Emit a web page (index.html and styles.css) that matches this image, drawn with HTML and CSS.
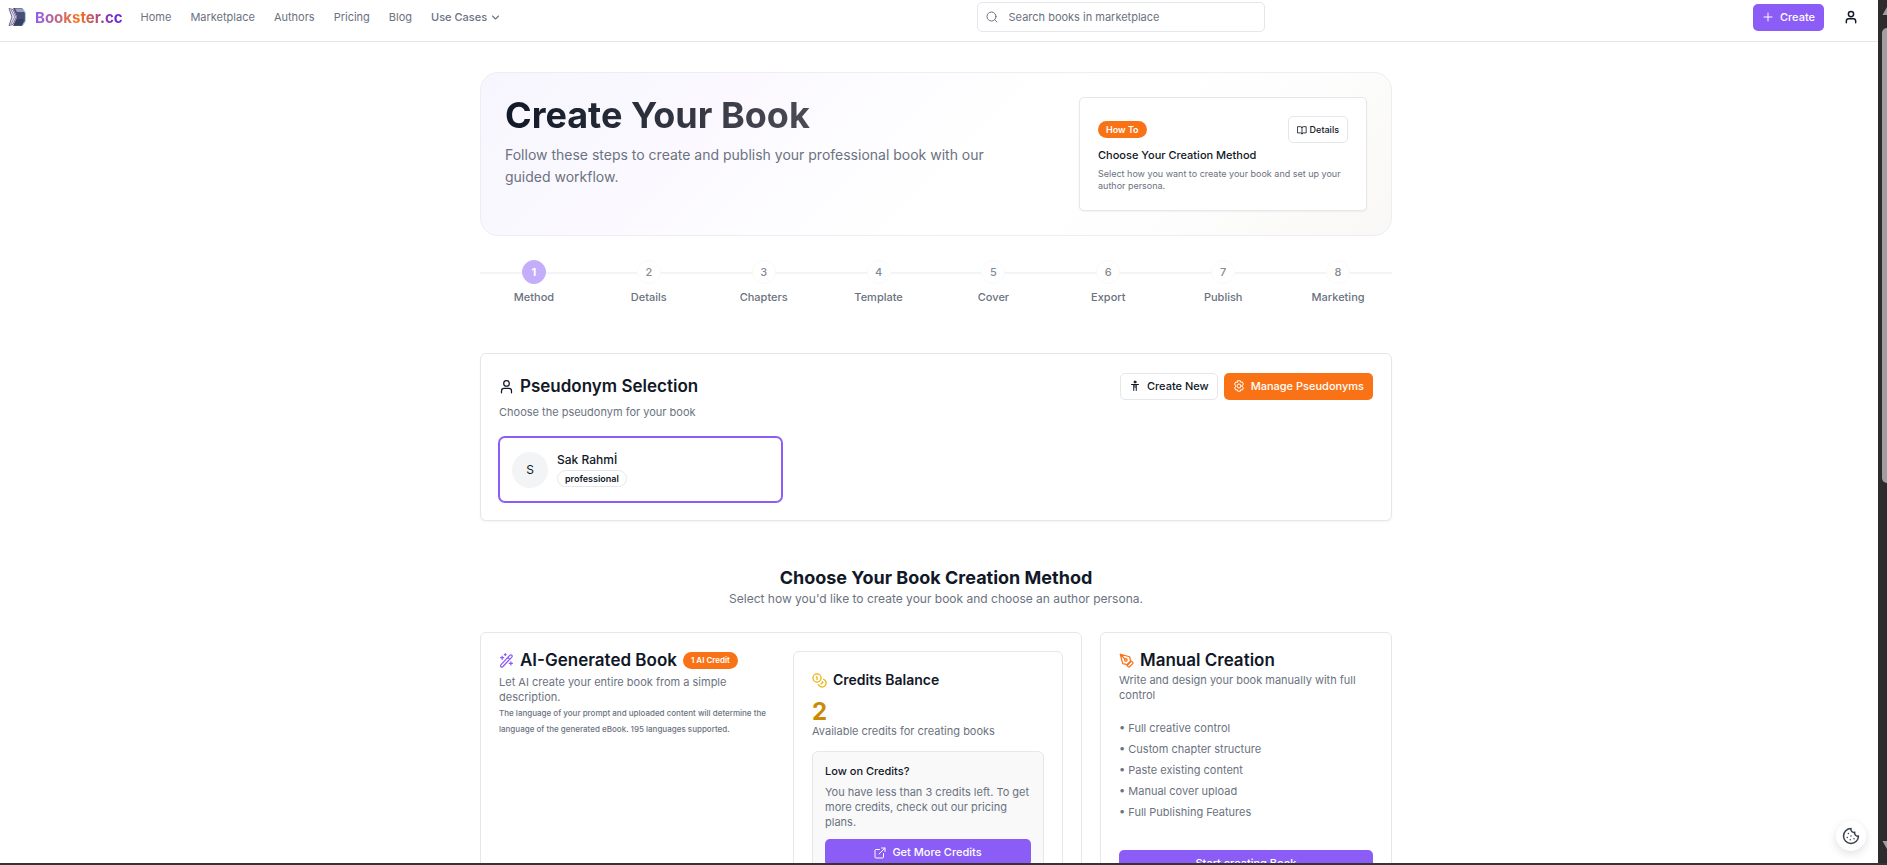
FILE: index.html
```html
<!DOCTYPE html>
<html lang="en">
<head>
<meta charset="utf-8">
<meta name="viewport" content="width=device-width, initial-scale=1">
<title>Create Your Book – Bookster.cc</title>
<link rel="stylesheet" href="styles.css">
</head>
<body>
<div class="window">
<div class="page">
  <header class="topbar">
    <div class="topbar-left">
      <a class="brand" href="#">
        <svg class="brand-mark" viewBox="0 0 18 20" aria-hidden="true">
          <path d="M5 1h9l3 4v10l-3 4H5l4-9z" fill="#4b4f78"/>
          <path d="M7 1.500h7l2 3.500H9z" fill="#9aa3c4"/>
          <path d="M9 12h7l-2 6H6z" fill="#394066"/>
          <path d="M15 2l2.500 4v8L15 18" fill="none" stroke="#a9d5e3" stroke-width="1.200"/>
          <path d="M1 1.500l4 1 3.500 7.500L5 17.500l-4 1L4 10z" fill="#e4dff0" stroke="#71678f" stroke-width="1"/>
          <path d="M3 3l4 7-4 7" fill="none" stroke="#8d84aa" stroke-width="1"/>
        </svg>
        <span class="brand-name">Bookster.cc</span>
      </a>
      <nav class="nav">
        <a href="#">Home</a>
        <a href="#">Marketplace</a>
        <a href="#">Authors</a>
        <a href="#">Pricing</a>
        <a href="#">Blog</a>
        <button class="nav-menu" type="button">Use Cases
          <svg class="icon icon-xs" viewBox="0 0 24 24"><path d="m4 8 8 8 8-8"/></svg>
        </button>
      </nav>
    </div>
    <label class="search">
      <svg class="icon icon-sm" viewBox="0 0 24 24"><circle cx="11" cy="11" r="9"/><path d="m22 22-4.500-4.500"/></svg>
      <input type="search" placeholder="Search books in marketplace" aria-label="Search books in marketplace">
    </label>
    <div class="topbar-right">
      <button class="btn btn-primary" type="button">
        <svg class="icon icon-sm" viewBox="0 0 24 24"><path d="M4 12h16M12 4v16"/></svg>
        Create
      </button>
      <button class="btn-account" type="button" aria-label="Account">
        <svg class="icon icon-md" viewBox="0 0 24 24"><circle cx="12" cy="7" r="4.500"/><path d="M4 22v-3a4 4 0 0 1 4-4h8a4 4 0 0 1 4 4v3"/></svg>
      </button>
    </div>
  </header>

  <main class="content">
    <section class="hero">
      <div class="hero-text">
        <h1>Create Your Book</h1>
        <p>Follow these steps to create and publish your professional book with our guided workflow.</p>
      </div>
      <aside class="howto">
        <div class="howto-top">
          <span class="badge badge-orange">How To</span>
          <button class="btn btn-outline btn-small" type="button">
            <svg class="icon icon-book" viewBox="0 0 24 24"><path d="M12 6v15M2 4h7a3 3 0 0 1 3 3 3 3 0 0 1 3-3h7v15h-7a3 3 0 0 0-3 3 3 3 0 0 0-3-3H2z"/></svg>
            Details
          </button>
        </div>
        <h2>Choose Your Creation Method</h2>
        <p>Select how you want to create your book and set up your author persona.</p>
      </aside>
    </section>

    <ol class="steps">
      <li class="step step-current"><span class="step-dot">1</span><span>Method</span></li>
      <li class="step"><span class="step-dot">2</span><span>Details</span></li>
      <li class="step"><span class="step-dot">3</span><span>Chapters</span></li>
      <li class="step"><span class="step-dot">4</span><span>Template</span></li>
      <li class="step"><span class="step-dot">5</span><span>Cover</span></li>
      <li class="step"><span class="step-dot">6</span><span>Export</span></li>
      <li class="step"><span class="step-dot">7</span><span>Publish</span></li>
      <li class="step"><span class="step-dot">8</span><span>Marketing</span></li>
    </ol>

    <section class="card pseudonym">
      <div class="pseudonym-head">
        <h2 class="card-title">
          <svg class="icon icon-lg" viewBox="0 0 24 24"><circle cx="12" cy="7" r="4.500"/><path d="M4 22v-3a4 4 0 0 1 4-4h8a4 4 0 0 1 4 4v3"/></svg>
          Pseudonym Selection
        </h2>
        <div class="actions">
          <button class="btn btn-outline" type="button">
            <svg class="icon icon-sm" viewBox="0 0 24 24"><circle cx="12" cy="4" r="2" fill="currentColor"/><path d="M5 9h14M12 9v6M9.500 9v12M14.500 9v12"/></svg>
            Create New
          </button>
          <button class="btn btn-orange" type="button">
            <svg class="icon icon-sm" viewBox="0 0 24 24"><path d="M9.500 1.500h5l1 3 3-.5 2.500 4-2 2.500v3l2 2.500-2.500 4-3-.5-1 3h-5l-1-3-3 .5L3 16l2-2.500v-3L3 8l2.500-4 3 .5z"/><circle cx="12" cy="12" r="4"/></svg>
            Manage Pseudonyms
          </button>
        </div>
      </div>
      <p class="muted">Choose the pseudonym for your book</p>
      <button class="persona" type="button">
        <span class="avatar">S</span>
        <span class="persona-info">
          <span class="persona-name">Sak Rahmİ</span>
          <span class="badge badge-outline">professional</span>
        </span>
      </button>
    </section>

    <section class="methods">
      <div class="methods-head">
        <h2>Choose Your Book Creation Method</h2>
        <p>Select how you'd like to create your book and choose an author persona.</p>
      </div>
      <div class="methods-grid">
        <article class="card ai">
          <div class="ai-intro">
            <h3 class="card-title">
              <svg class="icon icon-lg icon-purple" viewBox="0 0 24 24"><path d="M3 19 17.500 3.500a2 2 0 0 1 3 3L6 22a2 2 0 0 1-3-3zM14 7l3 3M5 5v5M2.500 7.500h5M19 14v5M16.500 16.500h5M10 1v3M8.500 2.500h3"/></svg>
              AI-Generated Book
              <span class="badge badge-orange badge-tiny">1 AI Credit</span>
            </h3>
            <p class="muted">Let AI create your entire book from a simple description.</p>
            <p class="note">The language of your prompt and uploaded content will determine the language of the generated eBook. 195 languages supported.</p>
          </div>
          <div class="card credits">
            <h4>
              <svg class="icon icon-lg icon-yellow" viewBox="0 0 24 24"><circle cx="8" cy="8" r="6.500"/><path d="M18.500 10a6.500 6.500 0 1 1-8.500 8.500M7 6h1v4.500M16.500 14l1 .700-3 3"/></svg>
              Credits Balance
            </h4>
            <strong class="credits-count">2</strong>
            <p class="muted">Available credits for creating books</p>
            <div class="low-credits">
              <h5>Low on Credits?</h5>
              <p class="muted">You have less than 3 credits left. To get more credits, check out our pricing plans.</p>
              <button class="btn btn-primary btn-block" type="button">
                <svg class="icon icon-sm" viewBox="0 0 24 24"><path d="M15 2h7v7M10 14 22 2M19 13v7a2 2 0 0 1-2 2H4a2 2 0 0 1-2-2V7a2 2 0 0 1 2-2h7"/></svg>
                Get More Credits
              </button>
            </div>
          </div>
        </article>
        <article class="card manual">
          <h3 class="card-title">
            <svg class="icon icon-lg icon-orange" viewBox="0 0 24 24"><path d="m15 22-2-2 7-7 2 2a1.500 1.500 0 0 1 0 2l-5 5a1.500 1.500 0 0 1-2 0zM18.500 13 17 6 2 2l4 15 7 1.500zM2 2l7.500 7.500"/><circle cx="11" cy="11" r="2"/></svg>
            Manual Creation
          </h3>
          <p class="muted">Write and design your book manually with full control</p>
          <ul class="features">
            <li>Full creative control</li>
            <li>Custom chapter structure</li>
            <li>Paste existing content</li>
            <li>Manual cover upload</li>
            <li>Full Publishing Features</li>
          </ul>
          <button class="btn btn-primary btn-block" type="button">Start creating Book</button>
        </article>
      </div>
    </section>
  </main>

  <button class="cookie" type="button" aria-label="Cookie settings">
    <svg class="icon icon-cookie" viewBox="0 0 24 24"><path d="M12 2a10 10 0 1 0 10 10 4 4 0 0 1-5-5 4 4 0 0 1-5-5M8.500 8.500v.01M16 15.500v.01M12 12v.01M11 17v.01M7 14v.01"/></svg>
  </button>
</div>
<div class="scrollbar" aria-hidden="true">
  <svg class="scroll-arrow" viewBox="0 0 10 10"><path d="M0 9 5 0l5 9z"/></svg>
  <div class="scroll-track"><div class="scroll-thumb"></div></div>
  <svg class="scroll-arrow" viewBox="0 0 10 10"><path d="M0 1 5 10l5-9z"/></svg>
</div>
</div>
</body>
</html>
```
FILE: styles.css
```css
:root {
  --ink: #111827;
  --gray: #6b7280;
  --line: #e5e7eb;
  --purple: #8b5cf6;
  --orange: #f97316;
}

* { box-sizing: border-box; margin: 0; }

body {
  font: 11px/15px Inter, "Liberation Sans", sans-serif;
  color: var(--ink);
  background: #2c2c2c;
}

a { color: inherit; text-decoration: none; }
button, input { font: inherit; color: inherit; }
button { cursor: pointer; }
h1, h2, h3, h4, h5 { font-weight: 600; }

.window {
  display: flex;
  height: 100vh;
  overflow: hidden;
  border-bottom: 2px solid #373435;
}

.page {
  position: relative;
  flex: 1;
  min-width: 0;
  overflow: hidden;
  background: #fff;
}

/* icons */
.icon {
  flex: none;
  fill: none;
  stroke: currentColor;
  stroke-width: 2;
  stroke-linecap: round;
  stroke-linejoin: round;
}
.icon-xs { width: 9px; height: 9px; stroke-width: 3; }
.icon-sm { width: 12px; height: 12px; }
.icon-md { width: 14px; height: 14px; stroke-width: 2.5; }
.icon-lg { width: 15px; height: 15px; }
.icon-book { width: 10px; height: 10px; }
.icon-cookie { width: 18px; height: 18px; }
.icon-purple { color: var(--purple); }
.icon-yellow { color: #eab308; }
.icon-orange { color: var(--orange); }

/* top bar */
.topbar {
  display: flex;
  align-items: center;
  justify-content: space-between;
  padding: 2px 12px 9px 8px;
  border-bottom: 1px solid var(--line);
}
.topbar-left, .topbar-right, .nav, .brand { display: flex; align-items: center; }
.topbar-left { gap: 18px; }
.brand { gap: 9px; }
.brand-mark { width: 18px; height: 20px; }
.brand-name {
  font-size: 15px;
  font-weight: 700;
  background: linear-gradient(90deg, var(--purple), var(--orange) 50%, #6d28d9 90%);
  background-clip: text;
  color: transparent;
}
.nav { gap: 19px; color: var(--gray); }
.nav-menu {
  display: flex;
  align-items: center;
  gap: 4px;
  padding: 0;
  border: 0;
  background: none;
  font-weight: 500;
}
.search {
  display: flex;
  align-items: center;
  gap: 11px;
  width: 288px;
  height: 30px;
  margin-right: 12px;
  padding: 0 8px;
  border: 1px solid var(--line);
  border-radius: 5px;
  color: var(--gray);
}
.search input {
  flex: 1;
  min-width: 0;
  padding: 0;
  border: 0;
  outline: 0;
  background: none;
}
.search input::placeholder { color: var(--gray); opacity: 1; }
.topbar-right { gap: 12px; }
.btn-account {
  display: grid;
  place-items: center;
  width: 30px;
  height: 27px;
  padding: 0;
  border: 0;
  background: none;
}

/* buttons and badges */
.btn {
  display: inline-flex;
  align-items: center;
  justify-content: center;
  gap: 6px;
  height: 27px;
  padding: 0 8px;
  border: 1px solid transparent;
  border-radius: 5px;
  font-weight: 500;
  white-space: nowrap;
}
.btn-primary { background: var(--purple); color: #fff; }
.btn-orange { background: var(--orange); color: #fff; }
.btn-outline { background: #fff; border-color: var(--line); }
.btn-small { gap: 3px; font-size: 9px; }
.btn-block { width: 100%; }

.badge {
  display: inline-block;
  padding: 0 7px;
  border: 1px solid transparent;
  border-radius: 9px;
  font-size: 9px;
  line-height: 15px;
  font-weight: 600;
}
.badge-orange { background: var(--orange); color: #fff; }
.badge-outline { border-color: var(--line); }
.badge-tiny { font-size: 8px; }

/* main column */
.content {
  max-width: 918px;
  margin: 0 auto;
  padding: 30px 6px 0 0;
}
.hero {
  display: flex;
  align-items: flex-start;
  justify-content: space-between;
  padding: 24px;
  border: 1px solid #eeeef2;
  border-radius: 18px;
  background: linear-gradient(135deg, #f7f6fe, #fbf9ff 25%, #fff 55%, #fefefe 75%, #f9f8f6);
}
.hero-text { max-width: 504px; }
.hero h1 {
  width: max-content;
  font-size: 36px;
  line-height: 36px;
  font-weight: 700;
  background: linear-gradient(90deg, #111827, #4b4b55);
  background-clip: text;
  color: transparent;
}
.hero-text p {
  margin-top: 11px;
  font-size: 14px;
  line-height: 22px;
  color: var(--gray);
}
.howto {
  width: 288px;
  padding: 18px;
  border: 1px solid var(--line);
  border-radius: 5px;
  background: #fff;
  box-shadow: 0 1px 2px rgb(0 0 0 / 5%);
}
.howto-top { display: flex; align-items: center; justify-content: space-between; }
.howto h2 { margin-top: 4px; font-size: 11px; line-height: 16px; font-weight: 500; }
.howto p { margin-top: 5px; font-size: 9px; line-height: 12px; color: var(--gray); }

/* steps */
.steps {
  display: grid;
  grid-template-columns: repeat(8, 1fr);
  column-gap: 7px;
  margin-top: 24px;
  padding: 0;
  list-style: none;
  color: var(--gray);
  background: linear-gradient(#f3f4f6, #f3f4f6) 0 12px / 100% 2px no-repeat;
}
.step {
  display: flex;
  flex-direction: column;
  align-items: center;
  gap: 6px;
  font-weight: 500;
}
.step-dot {
  width: 24px;
  height: 24px;
  border: 1px solid #f9fafb;
  border-radius: 50%;
  background: #fff;
  line-height: 22px;
  text-align: center;
  color: #858a95;
}
.step-current .step-dot { border-color: #c4adfa; background: #c4adfa; color: #fff; font-weight: 700; }

/* cards */
.card {
  padding: 18px;
  border: 1px solid var(--line);
  border-radius: 6px;
  background: #fff;
}
.card-title {
  display: flex;
  align-items: center;
  gap: 6px;
  font-size: 17px;
  line-height: 18px;
  white-space: nowrap;
}
.muted { color: var(--gray); }

.pseudonym { margin-top: 48px; box-shadow: 0 1px 2px rgb(0 0 0 / 5%); }
.pseudonym-head { display: flex; align-items: center; justify-content: space-between; }
.pseudonym-head .card-title { line-height: 28px; }
.pseudonym > .muted { margin-top: 5px; }
.actions { display: flex; gap: 6px; }
.persona {
  display: flex;
  align-items: center;
  gap: 9px;
  width: 283px;
  height: 65px;
  margin-top: 17px;
  padding: 0 12px;
  border: 1px solid var(--purple);
  border-radius: 6px;
  background: #fff;
  box-shadow: 0 0 0 1px var(--purple);
  text-align: left;
}
.avatar {
  width: 36px;
  height: 36px;
  border-radius: 50%;
  background: #f3f4f6;
  font-size: 12px;
  line-height: 36px;
  text-align: center;
}
.persona-info { display: flex; flex-direction: column; align-items: flex-start; gap: 3px; }
.persona-name { font-size: 12px; font-weight: 500; }

/* methods */
.methods-head { margin: 47px 0 25px; text-align: center; }
.methods-head h2 { font-size: 18px; line-height: 20px; font-weight: 700; }
.methods-head p { margin-top: 3px; font-size: 12px; line-height: 16px; color: var(--gray); }
.methods-grid { display: grid; grid-template-columns: 602px 1fr; gap: 18px; }
.ai { display: grid; grid-template-columns: 1fr 1fr; gap: 24px; }
.ai-intro .muted { margin-top: 6px; }
.note { font-size: 8px; line-height: 16px; font-weight: 500; color: var(--gray); }
.credits h4 { display: flex; align-items: center; gap: 6px; font-size: 14px; line-height: 20px; }
.credits-count { display: block; margin-top: 10px; font-size: 24px; line-height: 24px; color: #ca8a04; }
.low-credits {
  margin-top: 12px;
  padding: 12px;
  border: 1px solid var(--line);
  border-radius: 6px;
  background: #f9f9fa;
}
.low-credits h5 { font-size: 11px; font-weight: 500; }
.low-credits .muted { margin: 6px 0 9px; }
.manual > .muted { margin-top: 4px; }
.features {
  display: grid;
  gap: 6px;
  margin: 18px 0 30px;
  padding: 0;
  list-style: none;
  color: var(--gray);
}
.features li::before { content: "• "; }

/* floating button */
.cookie {
  position: absolute;
  right: 12px;
  bottom: 12px;
  display: grid;
  place-items: center;
  width: 30px;
  height: 30px;
  padding: 0;
  border: 0;
  border-radius: 50%;
  background: #fff;
  color: #374151;
  box-shadow: 0 3px 10px rgb(0 0 0 / 12%);
}

/* scrollbar */
.scrollbar {
  display: flex;
  flex-direction: column;
  width: 9px;
  padding: 7px 0 14px 4px;
  overflow: hidden;
}
.scroll-arrow { flex: none; width: 10px; height: 9px; fill: #9f9f9f; }
.scroll-track { flex: 1; padding-top: 12px; }
.scroll-thumb { width: 10px; height: 56%; border-radius: 5px; background: #9f9f9f; }
```
